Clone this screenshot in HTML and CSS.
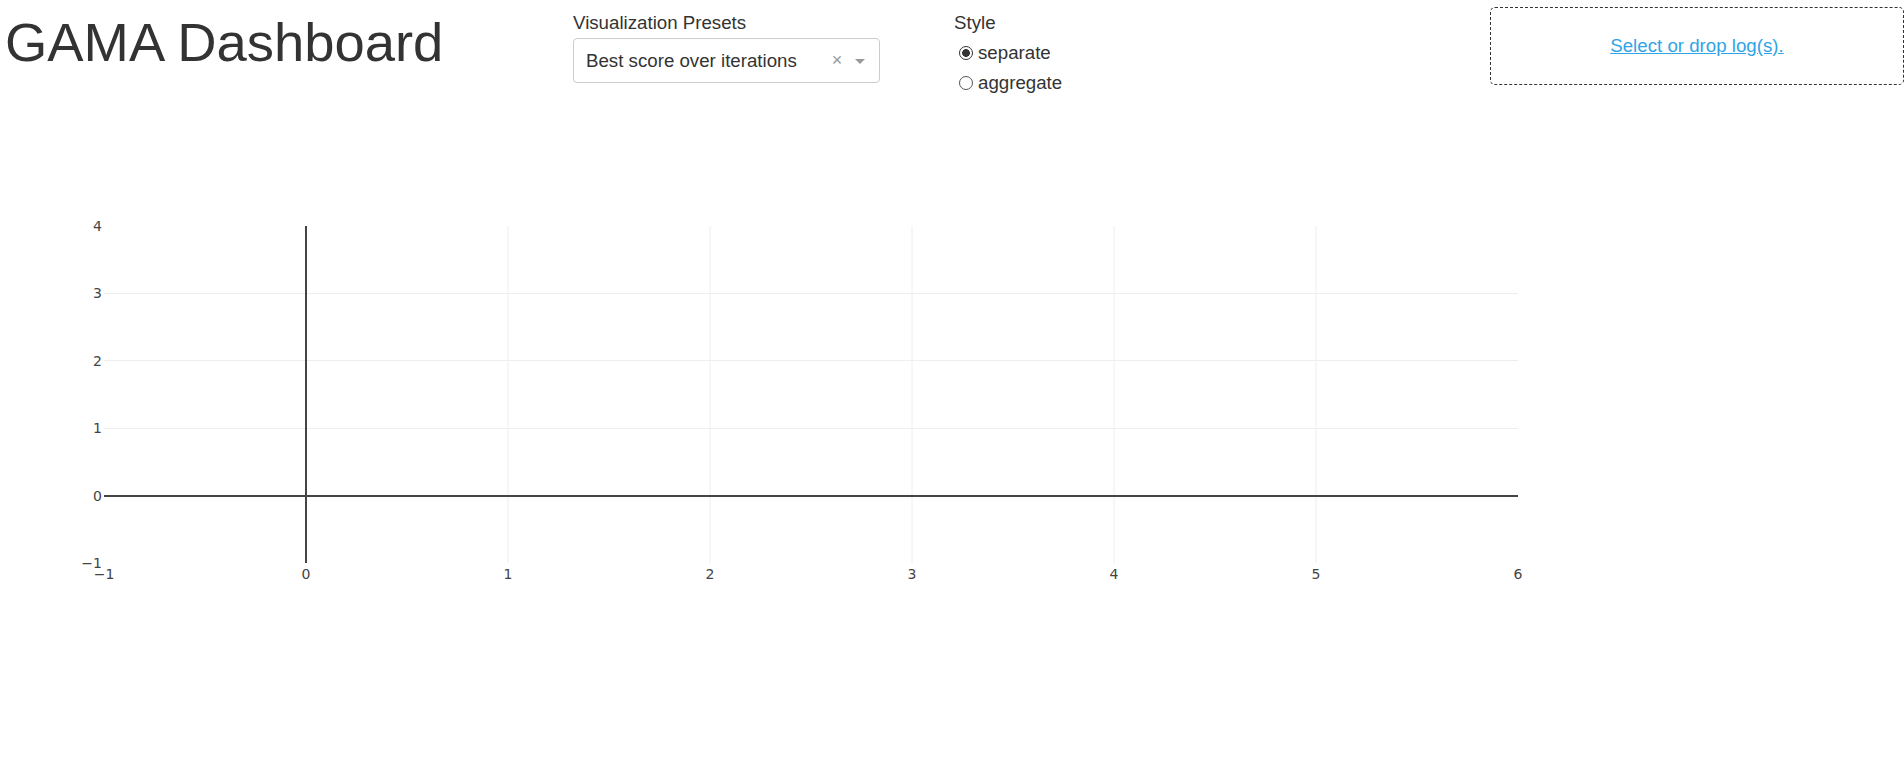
FILE: index.html
```html
<!DOCTYPE html>
<html lang="en">
<head>
<meta charset="utf-8">
<title>GAMA Dashboard</title>
<link rel="stylesheet" href="styles.css">
</head>
<body>
<header class="top">
  <h1 class="title">GAMA Dashboard</h1>
  <div class="presets">
    <div class="label">Visualization Presets</div>
    <div class="select">
      <span class="select-value">Best score over iterations</span>
      <span class="select-clear">×</span>
      <span class="select-arrow"></span>
    </div>
  </div>
  <div class="style">
    <div class="label">Style</div>
    <label class="radio-row"><span class="radio checked"></span>separate</label>
    <label class="radio-row"><span class="radio"></span>aggregate</label>
  </div>
  <div class="upload"><a href="#" class="upload-link">Select or drop log(s).</a></div>
</header>
<section class="graph">
  <svg class="plot" width="1904" height="600" viewBox="0 98 1904 600" xmlns="http://www.w3.org/2000/svg">
    <g class="grid">
      <line x1="508" y1="226" x2="508" y2="563"/>
      <line x1="710" y1="226" x2="710" y2="563"/>
      <line x1="912" y1="226" x2="912" y2="563"/>
      <line x1="1114" y1="226" x2="1114" y2="563"/>
      <line x1="1316" y1="226" x2="1316" y2="563"/>
      <line x1="104" y1="293.5" x2="1518" y2="293.5"/>
      <line x1="104" y1="360.5" x2="1518" y2="360.5"/>
      <line x1="104" y1="428.5" x2="1518" y2="428.5"/>
    </g>
    <g class="zero">
      <line x1="306" y1="226" x2="306" y2="563"/>
      <line x1="104" y1="496" x2="1518" y2="496"/>
    </g>
    <g class="ylabels">
      <text x="102" y="231">4</text>
      <text x="102" y="298.4">3</text>
      <text x="102" y="365.8">2</text>
      <text x="102" y="433.2">1</text>
      <text x="102" y="500.6">0</text>
      <text x="102" y="568">−1</text>
    </g>
    <g class="xlabels">
      <text x="104" y="579">−1</text>
      <text x="306" y="579">0</text>
      <text x="508" y="579">1</text>
      <text x="710" y="579">2</text>
      <text x="912" y="579">3</text>
      <text x="1114" y="579">4</text>
      <text x="1316" y="579">5</text>
      <text x="1518" y="579">6</text>
    </g>
  </svg>
</section>
</body>
</html>
```
FILE: styles.css
```css
body {
  margin: 0;
  font-family: "Liberation Sans", Arial, sans-serif;
  color: #333;
  background: #fff;
}

.top {
  display: flex;
  align-items: flex-start;
  padding-top: 8px;
  height: 98px;
  box-sizing: border-box;
}

.title {
  margin: 8px 0 0 0;
  width: 573px;
  padding-left: 5px;
  box-sizing: border-box;
  font-size: 54.4px;
  line-height: 54px;
  font-weight: normal;
  color: #333;
}

.presets {
  width: 307px;
}

.label {
  font-size: 18.7px;
  line-height: 30px;
  color: #333;
}

.select {
  margin-top: 0;
  height: 45px;
  box-sizing: border-box;
  border: 1px solid #ccc;
  border-radius: 4px;
  display: flex;
  align-items: center;
  padding-left: 12px;
  padding-right: 14px;
}

.select-value {
  flex: 1;
  font-size: 18.7px;
  color: #333;
}

.select-clear {
  width: 18px;
  text-align: center;
  margin-right: 9px;
  font-size: 18px;
  color: #999;
}

.select-arrow {
  width: 0;
  height: 0;
  border-style: solid;
  border-width: 5px 5px 0;
  border-color: #999 transparent transparent;
  margin-top: 2px;
}

.style {
  margin-left: 74px;
}

.radio-row {
  display: flex;
  align-items: center;
  font-size: 18.7px;
  line-height: 30px;
  color: #333;
}

.radio {
  width: 14px;
  height: 14px;
  box-sizing: border-box;
  border: 1px solid #555;
  border-radius: 50%;
  margin: 0 5px 0 5px;
  background: #fff;
}

.radio.checked {
  border: 1.5px solid #333;
  background: radial-gradient(circle, #333 0, #333 3.6px, #fff 4.1px);
}

.upload {
  margin-left: auto;
  margin-top: -1px;
  width: 414px;
  height: 78px;
  box-sizing: border-box;
  border: 1px dashed #333;
  border-radius: 5px;
  display: flex;
  align-items: center;
  justify-content: center;
}

.upload-link {
  color: #2fa4e7;
  font-size: 18.7px;
  text-decoration: underline;
}

.graph {
  display: block;
}

.plot {
  display: block;
}

.grid line {
  stroke: #eee;
  stroke-width: 1;
}

.zero line {
  stroke: #444;
  stroke-width: 2;
}

.ylabels text,
.xlabels text {
  font-family: "DejaVu Sans", Verdana, sans-serif;
  font-size: 14px;
  fill: #444;
}

.ylabels text {
  text-anchor: end;
}

.xlabels text {
  text-anchor: middle;
}
```
